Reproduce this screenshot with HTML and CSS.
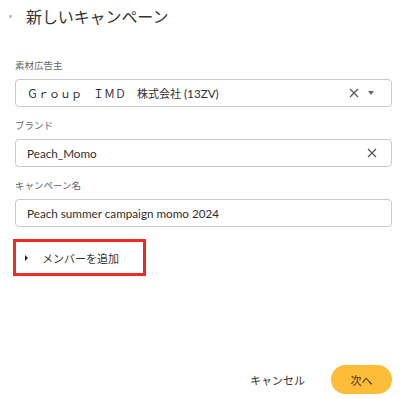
FILE: index.html
```html
<!DOCTYPE html>
<html lang="ja">
<head>
    <meta charset="UTF-8">
    <meta name="viewport" content="width=device-width, initial-scale=1.0">
    <title>新しいキャンペーン</title>
    <link rel="stylesheet" href="styles.css">
</head>
<body>
<div class="page">
    <header class="title-row">
        <span class="bullet"></span>
        <h1>新しいキャンペーン</h1>
    </header>

    <form class="campaign-form">
        <div class="field">
            <label>素材広告主</label>
            <div class="input">
                <span class="value"><span class="jp">Ｇｒｏｕｐ　ＩＭＤ　株式会社</span> (13ZV)</span>
                <span class="clear">
                    <svg width="10" height="10" viewBox="0 0 10 10"><path d="M1 1L9 9M9 1L1 9" stroke="#555" stroke-width="1.2"/></svg>
                </span>
                <span class="caret"></span>
            </div>
        </div>

        <div class="field">
            <label>ブランド</label>
            <div class="input">
                <span class="value">Peach_Momo</span>
                <span class="clear">
                    <svg width="10" height="10" viewBox="0 0 10 10"><path d="M1 1L9 9M9 1L1 9" stroke="#555" stroke-width="1.2"/></svg>
                </span>
            </div>
        </div>

        <div class="field">
            <label>キャンペーン名</label>
            <div class="input">
                <span class="value">Peach summer campaign momo 2024</span>
            </div>
        </div>

        <div class="members">
            <span class="arrow"></span>
            <span>メンバーを追加</span>
        </div>
    </form>

    <footer class="actions">
        <button type="button" class="btn-cancel">キャンセル</button>
        <button type="button" class="btn-next">次へ</button>
    </footer>
</div>
</body>
</html>
```

FILE: styles.css
```css
body {
    margin: 0;
    background: #fff;
    font-family: Roboto, "Noto Sans CJK JP", sans-serif;
    color: #333;
}

.page {
    height: 399px;
    display: flex;
    flex-direction: column;
    box-sizing: border-box;
    padding: 0 18px 5px 15px;
}

.title-row {
    display: flex;
    align-items: center;
    height: 32px;
    margin-left: -6px;
}

.bullet {
    width: 3px;
    height: 3px;
    background: #c4c4c4;
    margin-right: 14px;
}

h1 {
    margin: 0;
    font-size: 16px;
    font-weight: normal;
    color: #333;
    letter-spacing: -0.1px;
}

.campaign-form {
    margin-top: 27px;
}

.field {
    margin-bottom: 12px;
}

label {
    display: block;
    font-size: 9.5px;
    line-height: 14px;
    color: #666;
    margin-bottom: 6px;
}

.input {
    height: 28px;
    border: 1px solid #c9c9c9;
    border-radius: 4px;
    box-sizing: border-box;
    display: flex;
    align-items: center;
    padding: 0 14px 0 11px;
    font-size: 11.7px;
}

.value {
    flex: 1;
    white-space: nowrap;
    font-family: Lato, "Noto Sans CJK JP", sans-serif;
    color: #2e2e2e;
}

.value .jp {
    font-size: 11px;
    font-family: "Noto Sans CJK JP", sans-serif;
}

.clear {
    display: flex;
    align-items: center;
}

.caret {
    width: 0;
    height: 0;
    border-left: 3.5px solid transparent;
    border-right: 3.5px solid transparent;
    border-top: 4px solid #666;
    margin-left: 9px;
    margin-right: 3px;
}

.members {
    width: 133px;
    height: 37px;
    box-sizing: border-box;
    border: 3px solid #f22a22;
    margin-left: -2px;
    display: flex;
    align-items: center;
    padding-left: 9px;
    font-size: 11px;
    color: #333;
}

.arrow {
    width: 0;
    height: 0;
    border-top: 3px solid transparent;
    border-bottom: 3px solid transparent;
    border-left: 3.5px solid #222;
    margin-right: 14px;
}

.actions {
    margin-top: auto;
    display: flex;
    justify-content: flex-end;
    align-items: center;
    gap: 21px;
}

button {
    font-family: inherit;
    border: none;
    cursor: pointer;
    font-size: 11px;
    color: #333;
}

.btn-cancel {
    background: none;
    padding: 0 5px;
}

.btn-next {
    background: #fdbd38;
    width: 61px;
    height: 29px;
    border-radius: 15px;
    color: #3a3020;
}
```
